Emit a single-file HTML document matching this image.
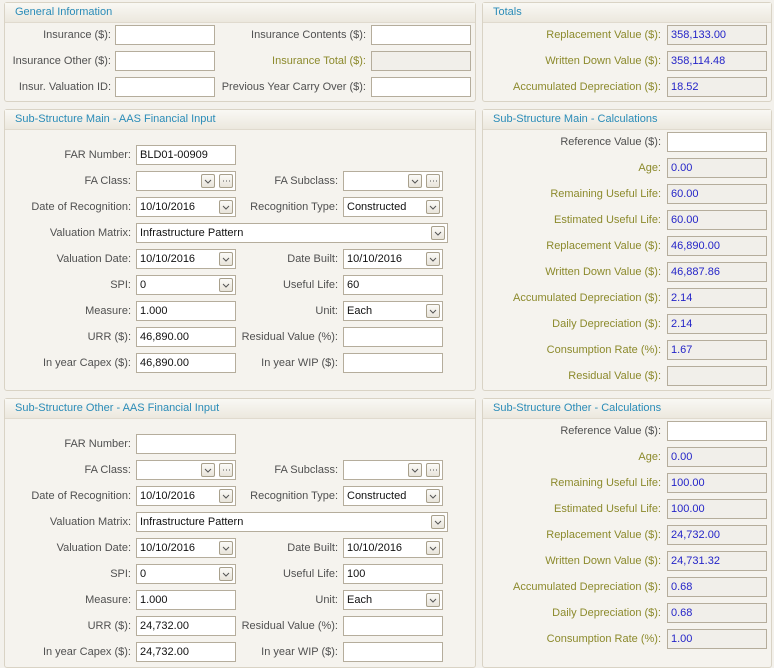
<!DOCTYPE html>
<html><head><meta charset="utf-8"><style>
*{box-sizing:border-box;margin:0;padding:0}
body{width:774px;height:651px;overflow:hidden;background:#f3f1ec;font-family:"Liberation Sans",sans-serif;font-size:11px;color:#505050;position:relative}
.p{position:absolute;border:1px solid #d9d3c5;border-radius:3px;background:#f5f3ee}
.h{height:20px;line-height:19px;padding-left:10px;color:#2a8cb8;background:linear-gradient(#f9f8f4,#ece8de);border-bottom:1px solid #e0dace}
.l{position:absolute;text-align:right;line-height:20px;white-space:nowrap}
.o{color:#8c8a2c}
.i{position:absolute;height:20px;border:1px solid #b5ad9c;background:#fff;line-height:18px;padding-left:3px;color:#111}
.r{background:#f1efea;color:#2424c8}
.b{position:absolute;width:14px;height:14px;border:1px solid #a8a08c;border-radius:2px;background:linear-gradient(#fbfaf7,#e8e4da)}
.b svg{display:block}
</style></head><body>

<div class="p" style="left:4px;top:2px;width:472px;height:100px"><div class="h">General Information</div></div>
<div class="l" style="left:0;width:111px;top:25px">Insurance ($):</div><div class="i" style="left:115px;top:25px;width:100px"></div>
<div class="l" style="left:0;width:111px;top:51px">Insurance Other ($):</div><div class="i" style="left:115px;top:51px;width:100px"></div>
<div class="l" style="left:0;width:111px;top:77px">Insur. Valuation ID:</div><div class="i" style="left:115px;top:77px;width:100px"></div>
<div class="l" style="left:200px;width:166px;top:25px">Insurance Contents ($):</div><div class="i" style="left:371px;top:25px;width:100px"></div>
<div class="l o" style="left:200px;width:166px;top:51px">Insurance Total ($):</div><div class="i r" style="left:371px;top:51px;width:100px"></div>
<div class="l" style="left:200px;width:166px;top:77px">Previous Year Carry Over ($):</div><div class="i" style="left:371px;top:77px;width:100px"></div>

<div class="p" style="left:482px;top:2px;width:290px;height:100px"><div class="h">Totals</div></div>
<div class="l o" style="left:480px;width:181px;top:25px">Replacement Value ($):</div><div class="i r" style="left:667px;top:25px;width:100px">358,133.00</div>
<div class="l o" style="left:480px;width:181px;top:51px">Written Down Value ($):</div><div class="i r" style="left:667px;top:51px;width:100px">358,114.48</div>
<div class="l o" style="left:480px;width:181px;top:77px">Accumulated Depreciation ($):</div><div class="i r" style="left:667px;top:77px;width:100px">18.52</div>

<div class="p" style="left:4px;top:109px;width:472px;height:282px"><div class="h">Sub-Structure Main - AAS Financial Input</div></div>
<div class="l" style="left:0;width:131px;top:145px">FAR Number:</div><div class="i" style="left:136px;top:145px;width:100px">BLD01-00909</div>
<div class="l" style="left:0;width:131px;top:171px">FA Class:</div><div class="i" style="left:136px;top:171px;width:100px"></div>
<div class="b" style="left:201px;top:174px"><svg width="12" height="12"><path d="M3 5l3 3 3-3" fill="none" stroke="#555"/></svg></div><div class="b" style="left:219px;top:174px"><svg width="12" height="12"><path d="M3 6h1M6 6h1M9 6h1" stroke="#555"/></svg></div>
<div class="l" style="left:200px;width:138px;top:171px">FA Subclass:</div><div class="i" style="left:343px;top:171px;width:100px"></div>
<div class="b" style="left:408px;top:174px"><svg width="12" height="12"><path d="M3 5l3 3 3-3" fill="none" stroke="#555"/></svg></div><div class="b" style="left:426px;top:174px"><svg width="12" height="12"><path d="M3 6h1M6 6h1M9 6h1" stroke="#555"/></svg></div>
<div class="l" style="left:0;width:131px;top:197px">Date of Recognition:</div><div class="i" style="left:136px;top:197px;width:100px">10/10/2016</div>
<div class="b" style="left:219px;top:200px"><svg width="12" height="12"><path d="M3 5l3 3 3-3" fill="none" stroke="#555"/></svg></div>
<div class="l" style="left:200px;width:138px;top:197px">Recognition Type:</div><div class="i" style="left:343px;top:197px;width:100px">Constructed</div>
<div class="b" style="left:426px;top:200px"><svg width="12" height="12"><path d="M3 5l3 3 3-3" fill="none" stroke="#555"/></svg></div>
<div class="l" style="left:0;width:131px;top:223px">Valuation Matrix:</div><div class="i" style="left:136px;top:223px;width:312px">Infrastructure Pattern</div>
<div class="b" style="left:431px;top:226px"><svg width="12" height="12"><path d="M3 5l3 3 3-3" fill="none" stroke="#555"/></svg></div>
<div class="l" style="left:0;width:131px;top:249px">Valuation Date:</div><div class="i" style="left:136px;top:249px;width:100px">10/10/2016</div>
<div class="b" style="left:219px;top:252px"><svg width="12" height="12"><path d="M3 5l3 3 3-3" fill="none" stroke="#555"/></svg></div>
<div class="l" style="left:200px;width:138px;top:249px">Date Built:</div><div class="i" style="left:343px;top:249px;width:100px">10/10/2016</div>
<div class="b" style="left:426px;top:252px"><svg width="12" height="12"><path d="M3 5l3 3 3-3" fill="none" stroke="#555"/></svg></div>
<div class="l" style="left:0;width:131px;top:275px">SPI:</div><div class="i" style="left:136px;top:275px;width:100px">0</div>
<div class="b" style="left:219px;top:278px"><svg width="12" height="12"><path d="M3 5l3 3 3-3" fill="none" stroke="#555"/></svg></div>
<div class="l" style="left:200px;width:138px;top:275px">Useful Life:</div><div class="i" style="left:343px;top:275px;width:100px">60</div>
<div class="l" style="left:0;width:131px;top:301px">Measure:</div><div class="i" style="left:136px;top:301px;width:100px">1.000</div>
<div class="l" style="left:200px;width:138px;top:301px">Unit:</div><div class="i" style="left:343px;top:301px;width:100px">Each</div>
<div class="b" style="left:426px;top:304px"><svg width="12" height="12"><path d="M3 5l3 3 3-3" fill="none" stroke="#555"/></svg></div>
<div class="l" style="left:0;width:131px;top:327px">URR ($):</div><div class="i" style="left:136px;top:327px;width:100px">46,890.00</div>
<div class="l" style="left:200px;width:138px;top:327px">Residual Value (%):</div><div class="i" style="left:343px;top:327px;width:100px"></div>
<div class="l" style="left:0;width:131px;top:353px">In year Capex ($):</div><div class="i" style="left:136px;top:353px;width:100px">46,890.00</div>
<div class="l" style="left:200px;width:138px;top:353px">In year WIP ($):</div><div class="i" style="left:343px;top:353px;width:100px"></div>

<div class="p" style="left:482px;top:109px;width:290px;height:282px"><div class="h">Sub-Structure Main - Calculations</div></div>
<div class="l" style="left:480px;width:181px;top:132px">Reference Value ($):</div><div class="i" style="left:667px;top:132px;width:100px"></div>
<div class="l o" style="left:480px;width:181px;top:158px">Age:</div><div class="i r" style="left:667px;top:158px;width:100px">0.00</div>
<div class="l o" style="left:480px;width:181px;top:184px">Remaining Useful Life:</div><div class="i r" style="left:667px;top:184px;width:100px">60.00</div>
<div class="l o" style="left:480px;width:181px;top:210px">Estimated Useful Life:</div><div class="i r" style="left:667px;top:210px;width:100px">60.00</div>
<div class="l o" style="left:480px;width:181px;top:236px">Replacement Value ($):</div><div class="i r" style="left:667px;top:236px;width:100px">46,890.00</div>
<div class="l o" style="left:480px;width:181px;top:262px">Written Down Value ($):</div><div class="i r" style="left:667px;top:262px;width:100px">46,887.86</div>
<div class="l o" style="left:480px;width:181px;top:288px">Accumulated Depreciation ($):</div><div class="i r" style="left:667px;top:288px;width:100px">2.14</div>
<div class="l o" style="left:480px;width:181px;top:314px">Daily Depreciation ($):</div><div class="i r" style="left:667px;top:314px;width:100px">2.14</div>
<div class="l o" style="left:480px;width:181px;top:340px">Consumption Rate (%):</div><div class="i r" style="left:667px;top:340px;width:100px">1.67</div>
<div class="l o" style="left:480px;width:181px;top:366px">Residual Value ($):</div><div class="i r" style="left:667px;top:366px;width:100px"></div>

<div class="p" style="left:4px;top:398px;width:472px;height:270px"><div class="h">Sub-Structure Other - AAS Financial Input</div></div>
<div class="l" style="left:0;width:131px;top:434px">FAR Number:</div><div class="i" style="left:136px;top:434px;width:100px"></div>
<div class="l" style="left:0;width:131px;top:460px">FA Class:</div><div class="i" style="left:136px;top:460px;width:100px"></div>
<div class="b" style="left:201px;top:463px"><svg width="12" height="12"><path d="M3 5l3 3 3-3" fill="none" stroke="#555"/></svg></div><div class="b" style="left:219px;top:463px"><svg width="12" height="12"><path d="M3 6h1M6 6h1M9 6h1" stroke="#555"/></svg></div>
<div class="l" style="left:200px;width:138px;top:460px">FA Subclass:</div><div class="i" style="left:343px;top:460px;width:100px"></div>
<div class="b" style="left:408px;top:463px"><svg width="12" height="12"><path d="M3 5l3 3 3-3" fill="none" stroke="#555"/></svg></div><div class="b" style="left:426px;top:463px"><svg width="12" height="12"><path d="M3 6h1M6 6h1M9 6h1" stroke="#555"/></svg></div>
<div class="l" style="left:0;width:131px;top:486px">Date of Recognition:</div><div class="i" style="left:136px;top:486px;width:100px">10/10/2016</div>
<div class="b" style="left:219px;top:489px"><svg width="12" height="12"><path d="M3 5l3 3 3-3" fill="none" stroke="#555"/></svg></div>
<div class="l" style="left:200px;width:138px;top:486px">Recognition Type:</div><div class="i" style="left:343px;top:486px;width:100px">Constructed</div>
<div class="b" style="left:426px;top:489px"><svg width="12" height="12"><path d="M3 5l3 3 3-3" fill="none" stroke="#555"/></svg></div>
<div class="l" style="left:0;width:131px;top:512px">Valuation Matrix:</div><div class="i" style="left:136px;top:512px;width:312px">Infrastructure Pattern</div>
<div class="b" style="left:431px;top:515px"><svg width="12" height="12"><path d="M3 5l3 3 3-3" fill="none" stroke="#555"/></svg></div>
<div class="l" style="left:0;width:131px;top:538px">Valuation Date:</div><div class="i" style="left:136px;top:538px;width:100px">10/10/2016</div>
<div class="b" style="left:219px;top:541px"><svg width="12" height="12"><path d="M3 5l3 3 3-3" fill="none" stroke="#555"/></svg></div>
<div class="l" style="left:200px;width:138px;top:538px">Date Built:</div><div class="i" style="left:343px;top:538px;width:100px">10/10/2016</div>
<div class="b" style="left:426px;top:541px"><svg width="12" height="12"><path d="M3 5l3 3 3-3" fill="none" stroke="#555"/></svg></div>
<div class="l" style="left:0;width:131px;top:564px">SPI:</div><div class="i" style="left:136px;top:564px;width:100px">0</div>
<div class="b" style="left:219px;top:567px"><svg width="12" height="12"><path d="M3 5l3 3 3-3" fill="none" stroke="#555"/></svg></div>
<div class="l" style="left:200px;width:138px;top:564px">Useful Life:</div><div class="i" style="left:343px;top:564px;width:100px">100</div>
<div class="l" style="left:0;width:131px;top:590px">Measure:</div><div class="i" style="left:136px;top:590px;width:100px">1.000</div>
<div class="l" style="left:200px;width:138px;top:590px">Unit:</div><div class="i" style="left:343px;top:590px;width:100px">Each</div>
<div class="b" style="left:426px;top:593px"><svg width="12" height="12"><path d="M3 5l3 3 3-3" fill="none" stroke="#555"/></svg></div>
<div class="l" style="left:0;width:131px;top:616px">URR ($):</div><div class="i" style="left:136px;top:616px;width:100px">24,732.00</div>
<div class="l" style="left:200px;width:138px;top:616px">Residual Value (%):</div><div class="i" style="left:343px;top:616px;width:100px"></div>
<div class="l" style="left:0;width:131px;top:642px">In year Capex ($):</div><div class="i" style="left:136px;top:642px;width:100px">24,732.00</div>
<div class="l" style="left:200px;width:138px;top:642px">In year WIP ($):</div><div class="i" style="left:343px;top:642px;width:100px"></div>

<div class="p" style="left:482px;top:398px;width:290px;height:270px"><div class="h">Sub-Structure Other - Calculations</div></div>
<div class="l" style="left:480px;width:181px;top:421px">Reference Value ($):</div><div class="i" style="left:667px;top:421px;width:100px"></div>
<div class="l o" style="left:480px;width:181px;top:447px">Age:</div><div class="i r" style="left:667px;top:447px;width:100px">0.00</div>
<div class="l o" style="left:480px;width:181px;top:473px">Remaining Useful Life:</div><div class="i r" style="left:667px;top:473px;width:100px">100.00</div>
<div class="l o" style="left:480px;width:181px;top:499px">Estimated Useful Life:</div><div class="i r" style="left:667px;top:499px;width:100px">100.00</div>
<div class="l o" style="left:480px;width:181px;top:525px">Replacement Value ($):</div><div class="i r" style="left:667px;top:525px;width:100px">24,732.00</div>
<div class="l o" style="left:480px;width:181px;top:551px">Written Down Value ($):</div><div class="i r" style="left:667px;top:551px;width:100px">24,731.32</div>
<div class="l o" style="left:480px;width:181px;top:577px">Accumulated Depreciation ($):</div><div class="i r" style="left:667px;top:577px;width:100px">0.68</div>
<div class="l o" style="left:480px;width:181px;top:603px">Daily Depreciation ($):</div><div class="i r" style="left:667px;top:603px;width:100px">0.68</div>
<div class="l o" style="left:480px;width:181px;top:629px">Consumption Rate (%):</div><div class="i r" style="left:667px;top:629px;width:100px">1.00</div>
</body></html>
